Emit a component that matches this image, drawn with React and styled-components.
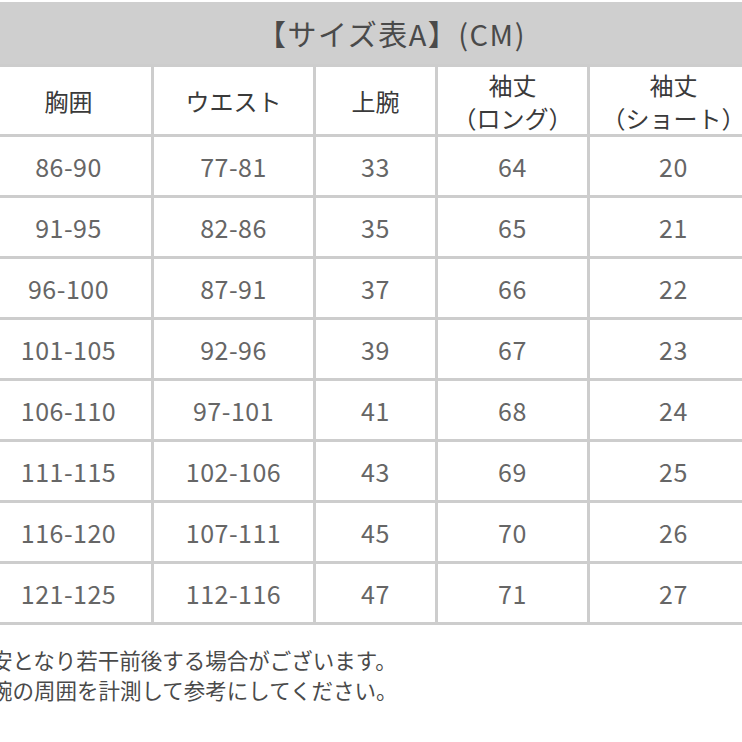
import React from "react";
import styled, { createGlobalStyle } from "styled-components";

const rows = [
  ["86-90", "77-81", "33", "64", "20"],
  ["91-95", "82-86", "35", "65", "21"],
  ["96-100", "87-91", "37", "66", "22"],
  ["101-105", "92-96", "39", "67", "23"],
  ["106-110", "97-101", "41", "68", "24"],
  ["111-115", "102-106", "43", "69", "25"],
  ["116-120", "107-111", "45", "70", "26"],
  ["121-125", "112-116", "47", "71", "27"],
];

const headers = [
  ["胸囲"],
  ["ウエスト"],
  ["上腕"],
  ["袖丈", "（ロング）"],
  ["袖丈", "（ショート）"],
];

const App = () => {
  return (
    <Page>
      <Global />
      <Table>
        <Title>【サイズ表A】(CM)</Title>
        {headers.map((lines, i) => (
          <HeadCell key={i}>
            {lines.map((l) => (
              <span key={l}>{l}</span>
            ))}
          </HeadCell>
        ))}
        {rows.map((r, i) =>
          r.map((v, j) => <Cell key={i + "-" + j}>{v}</Cell>)
        )}
      </Table>
      <Notes>
        <p>安となり若干前後する場合がございます。</p>
        <p>腕の周囲を計測して参考にしてください。</p>
      </Notes>
    </Page>
  );
};

export default App;

//********************************************************  style component
const Global = createGlobalStyle`
  html, body {
    margin: 0;
    padding: 0;
    background: #fff;
    overflow: hidden;
  }
  body {
    font-family: "Noto Sans CJK JP", "Noto Sans", sans-serif;
  }
`;

const Page = styled.div`
  width: 742px;
  height: 742px;
  padding-top: 2px;
  box-sizing: border-box;
  overflow: hidden;
`;

const Table = styled.div`
  display: grid;
  grid-template-columns: 165px 159px 119px 149px 167px;
  grid-template-rows: 62px 67px repeat(8, 58px);
  gap: 3px;
  padding-bottom: 3px;
  width: 771px;
  margin-left: -14px;
  background: #cdcdcd;
`;

const Title = styled.div`
  grid-column: 1 / -1;
  display: flex;
  align-items: center;
  justify-content: center;
  padding-left: 40px;
  background: #cfcfcf;
  color: #4a4a4a;
  font-size: 29px;
  letter-spacing: 1.5px;
`;

const HeadCell = styled.div`
  display: flex;
  flex-direction: column;
  align-items: center;
  justify-content: center;
  background: #fff;
  color: #3a3a3a;
  font-size: 24px;
  line-height: 33px;
`;

const Cell = styled.div`
  display: flex;
  align-items: center;
  justify-content: center;
  background: #fff;
  color: #666;
  font-size: 25px;
  letter-spacing: 0.5px;
`;

const Notes = styled.div`
  margin: 20px 0 0 -9px;
  color: #4a4a4a;
  font-size: 21.5px;
  line-height: 30px;

  p {
    margin: 0;
    white-space: nowrap;
  }
`;
